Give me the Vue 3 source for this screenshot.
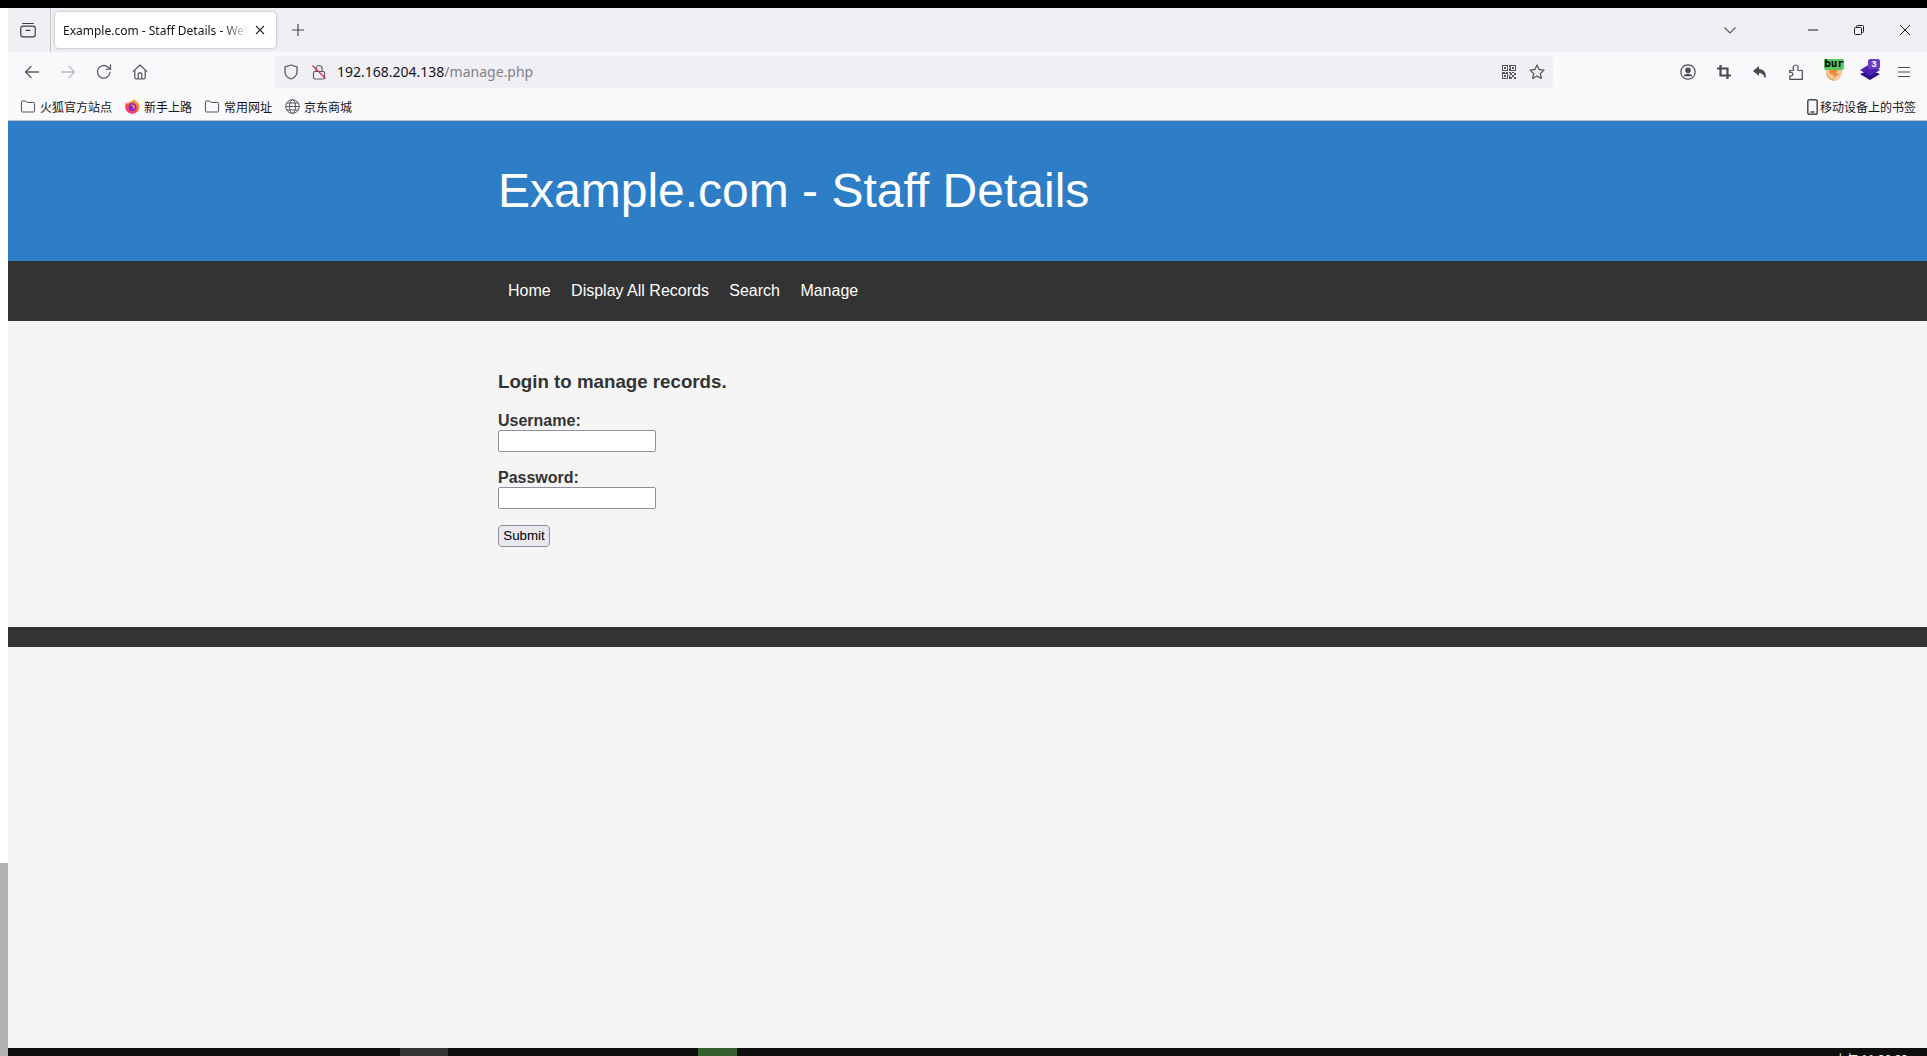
<script setup>
const bookmarks = [
  { icon: 'folder', label: '火狐官方站点' },
  { icon: 'firefox', label: '新手上路' },
  { icon: 'folder', label: '常用网址' },
  { icon: 'globe', label: '京东商城' }
]
const navLinks = ['Home', 'Display All Records', 'Search', 'Manage']
</script>

<template>
  <div class="screen">
    <div class="top-edge"></div>
    <div class="desktop">
      <div class="rail">
        <div class="rail-thumb"></div>
      </div>
      <div class="window">
        <div class="tabstrip">
          <button class="tab-list" aria-label="tabs">
            <svg width="16" height="16" viewBox="0 0 16 16" fill="none" stroke="#3b3b42" stroke-width="1.2">
              <rect x="0.8" y="4.2" width="14.4" height="10.6" rx="2" />
              <path d="M2.8 1.5h10.4" stroke-linecap="round" />
              <path d="M6.2 8.4h3.6" stroke-linecap="round" />
            </svg>
          </button>
          <div class="tab">
            <span class="tab-title">Example.com - Staff Details - Web</span>
            <svg class="tab-close" width="10" height="10" viewBox="0 0 10 10" stroke="#2b2a33" stroke-width="1.1">
              <path d="M1 1l8 8M9 1l-8 8" />
            </svg>
          </div>
          <button class="new-tab" aria-label="new tab">
            <svg width="12" height="12" viewBox="0 0 12 12" stroke="#4a4a52" stroke-width="1.2">
              <path d="M6 0v12M0 6h12" />
            </svg>
          </button>
          <div class="strip-space"></div>
          <button class="tab-menu" aria-label="list tabs">
            <svg width="12" height="7" viewBox="0 0 12 7" fill="none" stroke="#55555c" stroke-width="1.1">
              <path d="M.5.5L6 6l5.500-5.500" />
            </svg>
          </button>
          <button class="win-btn" aria-label="minimise">
            <svg width="10" height="10" viewBox="0 0 10 10" stroke="#1a1a1a" stroke-width="1"><path d="M0 5h10" /></svg>
          </button>
          <button class="win-btn" aria-label="restore">
            <svg width="10" height="10" viewBox="0 0 10 10" fill="none" stroke="#1a1a1a" stroke-width="1">
              <rect x="0.500" y="2.500" width="7" height="7" rx="1" />
              <path d="M2.500 2.500V1.500a1 1 0 0 1 1-1h5a1 1 0 0 1 1 1v5a1 1 0 0 1-1 1H7.500" />
            </svg>
          </button>
          <button class="win-btn last" aria-label="close">
            <svg width="10" height="10" viewBox="0 0 10 10" stroke="#1a1a1a" stroke-width="1"><path d="M0 0l10 10M10 0L0 10" /></svg>
          </button>
        </div>

        <div class="toolbar">
          <button class="tool" aria-label="back">
            <svg width="16" height="14" viewBox="0 0 16 14" fill="none" stroke="#5b5b66" stroke-width="1.3" stroke-linecap="round" stroke-linejoin="round">
              <path d="M14.500 7H1.500M7 1.500L1.500 7 7 12.500" />
            </svg>
          </button>
          <button class="tool" aria-label="forward">
            <svg width="16" height="14" viewBox="0 0 16 14" fill="none" stroke="#b9b9c0" stroke-width="1.3" stroke-linecap="round" stroke-linejoin="round">
              <path d="M1.500 7h13M9 1.500L14.500 7 9 12.500" />
            </svg>
          </button>
          <button class="tool" aria-label="reload">
            <svg width="16" height="16" viewBox="0 0 16 16" fill="none" stroke="#5b5b66" stroke-width="1.3" stroke-linecap="round" stroke-linejoin="round">
              <path d="M14 8.500A6.300 6.300 0 1 1 11.800 3L14.500 5" />
              <path d="M14.500 1v4.200h-4.200" />
            </svg>
          </button>
          <button class="tool" aria-label="home">
            <svg width="16" height="16" viewBox="0 0 16 16" fill="none" stroke="#5b5b66" stroke-width="1.300" stroke-linejoin="round">
              <path d="M1 7.600L8 1l7 6.600M2.800 6.300V13.500a1.300 1.300 0 0 0 1.300 1.300h7.800a1.300 1.300 0 0 0 1.300-1.300V6.300" />
              <path d="M6.200 14.800V10a1 1 0 0 1 1-1h1.600a1 1 0 0 1 1 1v4.800" />
            </svg>
          </button>

          <div class="urlbar">
            <svg class="shield" width="16" height="16" viewBox="0 0 16 16" fill="none" stroke="#5b5b66" stroke-width="1.300" stroke-linejoin="round">
              <path d="M8 1L2 2.800V8c0 3.300 2.600 5.700 6 7 3.400-1.300 6-3.700 6-7V2.800z" />
            </svg>
            <svg class="lock" width="16" height="16" viewBox="0 0 16 16" fill="none" stroke-width="1.200">
              <rect x="2.500" y="7.500" width="11" height="7.500" rx="1.500" stroke="#5b5b66" />
              <path d="M5 7.500V4.500a3 3 0 0 1 6 0v3" stroke="#5b5b66" />
              <path d="M1.500 1.500l13 13" stroke="#e22850" stroke-width="1.300" />
            </svg>
            <span class="url"><span class="host">192.168.204.138</span><span class="path">/manage.php</span></span>
            <div class="url-space"></div>
            <svg class="qr" width="14" height="14" viewBox="0 0 14 14" fill="#55555c">
              <path fill-rule="evenodd" d="M0 0h6v6H0zM1 1v4h4V1zM8 0h6v6H8zM9 1v4h4V1zM0 8h6v6H0zM1 9v4h4V9z" />
              <path d="M2 2h2v2H2zM10 2h2v2h-2zM2 10h2v2H2zM7 0h1v2H7zM7 3h1v3H7zM7 7h2v1H7zM10 7h2v1h-2zM0 7h3v1H0zM4 7h2v1H4zM8 8h2v2H8zM12 8h2v2h-2zM10 10h2v2h-2zM7 10h1v4H7zM8 12h2v2H8zM12 12h2v2h-2z" />
            </svg>
            <svg class="star" width="16" height="16" viewBox="0 0 16 16" fill="none" stroke="#5b5b66" stroke-width="1.300" stroke-linejoin="round">
              <path d="M8 1l2.100 4.500 4.900.6-3.600 3.400.9 4.900L8 12l-4.300 2.400.9-4.900L1 6.100l4.900-.6z" />
            </svg>
          </div>

          <button class="tool first-right" aria-label="account">
            <svg width="16" height="16" viewBox="0 0 16 16" fill="none" stroke="#4a4a52" stroke-width="1.200">
              <circle cx="8" cy="8" r="7.200" />
              <circle cx="8" cy="6.300" r="2.800" fill="#4a4a52" stroke="none" />
              <path d="M3.500 12.300c1-1.800 2.600-2.500 4.500-2.500s3.500.7 4.500 2.500z" fill="#4a4a52" stroke="none" />
            </svg>
          </button>
          <button class="tool" aria-label="crop">
            <svg width="14" height="14" viewBox="0 0 14 14" fill="none" stroke="#4a4a52" stroke-width="2.200">
              <path d="M3.500 0v10.500H14" />
              <path d="M0 3.500h10.500V14" />
            </svg>
          </button>
          <button class="tool" aria-label="undo">
            <svg width="14" height="13" viewBox="0 0 14 13" fill="#4a4a52">
              <path d="M6 0L0 5l6 5V7c3 0 4.700 1.500 5.600 4.500.2.600 1 .6 1.100 0C13.500 6.500 10.500 3.300 6 3z" />
            </svg>
          </button>
          <button class="tool" aria-label="extensions">
            <svg width="14" height="16" viewBox="0 0 14 16" fill="none" stroke="#4a4a52" stroke-width="1.200" stroke-linejoin="round">
              <path d="M.7 6.500H4c.7 0 .8-.6.500-1.100C3.600 4 4.300 1 6.600 1s3 2.700 2.200 4.300c-.3.500-.2 1.200.500 1.200h4v8.800H.8V12c1.500.5 3-.3 3-1.800S2.200 7.800.7 8.500z" />
            </svg>
          </button>
          <button class="tool ext burp" aria-label="burp">
            <span class="burp-icon">
              <span class="burp-label">bur</span>
              <svg class="burp-fox" width="18" height="12" viewBox="0 0 18 12">
                <path d="M1 0h16c1 6-3 12-8 12S0 6 1 0z" fill="#f7c79b" />
                <path d="M4 1l9-1-2 4 3 1-6 4 1-3-4-1z" fill="#ee8a32" />
                <path d="M2 4c0 4 3 7 7 7" fill="none" stroke="#c9a052" stroke-width="1" />
              </svg>
            </span>
          </button>
          <button class="tool ext stack" aria-label="stack">
            <span class="stack-icon">
              <svg width="20" height="16" viewBox="0 0 20 16">
                <path d="M10 6l10 4-10 6L0 10z" fill="#2b0f86" />
                <path d="M10 0l10 6-10 6L0 6z" fill="#4d20b0" />
              </svg>
              <span class="stack-badge">3</span>
            </span>
          </button>
          <button class="tool menu" aria-label="menu">
            <svg width="12" height="10" viewBox="0 0 12 10" stroke="#4a4a52" stroke-width="1.100"><path d="M0 .5h12M0 5h12M0 9.500h12" /></svg>
          </button>
        </div>

        <div class="bookmarks">
          <div v-for="b in bookmarks" :key="b.label" class="bookmark" :class="{ wide: b.icon !== 'folder' }">
            <svg v-if="b.icon === 'folder'" width="14" height="13" viewBox="0 0 14 13" fill="none" stroke="#55555c" stroke-width="1" stroke-linejoin="round">
              <path d="M.5 2a1 1 0 0 1 1-1h3.300l1.500 1.500h6.200a1 1 0 0 1 1 1v7.500a1 1 0 0 1-1 1h-11a1 1 0 0 1-1-1z" />
            </svg>
            <svg v-else-if="b.icon === 'firefox'" width="15" height="15" viewBox="0 0 15 15">
              <defs>
                <linearGradient id="fx" x1="0.8" y1="0" x2="0.1" y2="1">
                  <stop offset="0" stop-color="#ffb52e" />
                  <stop offset="0.500" stop-color="#ff5a3c" />
                  <stop offset="1" stop-color="#f0268a" />
                </linearGradient>
              </defs>
              <path d="M9.500.3c.5 1.600 4.500 2.700 5 7a7.200 7.200 0 1 1-14.300-1c.2-1.200.7-2.300 1.300-3.100.2.800.6 1.200 1 1.500C3.500 3.300 6.800 2.800 9.500.3z" fill="url(#fx)" />
              <circle cx="7.600" cy="8" r="3.900" fill="#7a2bd6" />
              <path d="M5.200 6.200c1.800-1.500 4.500-.6 4.800 1.500.2 1.500-1 2.800-2.500 2.700 2-1.400.5-3.700-2.300-4.200z" fill="#ff8a3c" />
            </svg>
            <svg v-else width="15" height="15" viewBox="0 0 15 15" fill="none" stroke="#55555c" stroke-width="1">
              <circle cx="7.500" cy="7.500" r="6.800" />
              <ellipse cx="7.500" cy="7.500" rx="3" ry="6.800" />
              <path d="M.7 7.500h13.600M1.600 4h11.800M1.600 11h11.800" />
            </svg>
            <span>{{ b.label }}</span>
          </div>
          <div class="bm-space"></div>
          <div class="bookmark mobile">
            <svg width="11" height="16" viewBox="0 0 11 16" fill="none" stroke="#4a4a52" stroke-width="1.500">
              <rect x="0.800" y="0.800" width="9.400" height="14.400" rx="1.800" />
              <path d="M3.500 13h4" />
            </svg>
            <span>移动设备上的书签</span>
          </div>
        </div>

        <div class="page">
          <header class="site-head">
            <div class="container">
              <h1>Example.com - Staff Details</h1>
            </div>
          </header>
          <nav class="site-nav">
            <div class="container nav-row">
              <a v-for="l in navLinks" :key="l" href="#">{{ l }}</a>
            </div>
          </nav>
          <main class="container content">
            <h3>Login to manage records.</h3>
            <form @submit.prevent>
              <p><label for="user">Username:</label><input id="user" type="text" /></p>
              <p><label for="pass">Password:</label><input id="pass" type="password" /></p>
              <p><button class="submit" type="submit">Submit</button></p>
            </form>
          </main>
          <footer class="site-foot"></footer>
        </div>

        <div class="taskbar">
          <div class="task-item active"></div>
          <div class="task-item green"></div>
          <div class="clock">上午 11:30:33</div>
        </div>
      </div>
    </div>
  </div>
</template>

<style>
html, body { margin: 0; padding: 0; overflow: hidden; }
</style>

<style scoped>
.screen {
  width: 1927px;
  height: 1056px;
  display: flex;
  flex-direction: column;
  background: #000;
  overflow: hidden;
  font-family: "Liberation Sans", Arial, sans-serif;
}
.top-edge { height: 8px; background: #000; flex: none; }
.desktop { flex: 1; display: flex; min-height: 0; }
.rail {
  width: 8px;
  flex: none;
  background: #fff;
  display: flex;
  flex-direction: column;
  justify-content: flex-end;
}
.rail-thumb { height: 193px; background: #b2b2b2; }
.window { flex: 1; min-width: 0; display: flex; flex-direction: column; }

button { border: 0; background: none; padding: 0; display: flex; align-items: center; justify-content: center; }

.tabstrip { height: 44px; flex: none; display: flex; align-items: stretch; background: #f0f0f4; }
.tab-list { width: 42px; border-right: 1px solid #c4c4c8; box-sizing: content-box; padding-right: 0; }
.tab-list svg { margin-right: 2px; }
.tab {
  width: 221px;
  box-sizing: border-box;
  margin: 4px 0 4px 4px;
  padding: 0 11px 0 8px;
  background: #fff;
  border-radius: 4px;
  box-shadow: 0 0 3px rgba(0, 0, 0, .3);
  display: flex;
  align-items: center;
}
.tab-title {
  flex: 1;
  min-width: 0;
  white-space: nowrap;
  overflow: hidden;
  font: 12px "Noto Sans", sans-serif;
  color: #15141a;
  -webkit-mask-image: linear-gradient(to right, #000 85%, transparent 98%);
  mask-image: linear-gradient(to right, #000 85%, transparent 98%);
}
.tab-close { margin-left: 3px; flex: none; }
.new-tab { width: 36px; margin-left: 4px; }
.strip-space { flex: 1; }
.tab-menu { width: 36px; margin-right: 42px; }
.win-btn { width: 46px; }
.win-btn.last { width: 45px; }

.toolbar {
  height: 40px;
  flex: none;
  display: flex;
  align-items: center;
  padding: 0 5px 0 6px;
  background: #f9f9fb;
  box-sizing: border-box;
}
.tool { width: 36px; height: 32px; flex: none; }
.urlbar {
  flex: 1;
  min-width: 0;
  height: 32px;
  margin-left: 117px;
  border-radius: 4px;
  background: #f0f0f4;
  display: flex;
  align-items: center;
  padding: 0 8px 0 8px;
  box-sizing: border-box;
}
.lock { margin-left: 12px; }
.url { margin-left: 10px; padding-bottom: 2px; font: 14px "Noto Sans", sans-serif; white-space: nowrap; }
.host { color: #15141a; }
.path { color: #7f7f88; }
.url-space { flex: 1; }
.star { margin-left: 13px; }
.first-right { margin-left: 117px; }
.ext.burp { width: 40px; }
.burp-icon { position: relative; display: block; width: 20px; height: 22px; margin-bottom: 5px; }
.burp-label {
  position: absolute;
  left: 0;
  top: 0;
  width: 20px;
  height: 11px;
  background: #5cc861;
  border-radius: 2px;
  font: bold 11px/10px "DejaVu Sans Mono", monospace;
  letter-spacing: -0.2px;
  color: #000;
  text-align: center;
  z-index: 1;
}
.burp-fox { position: absolute; left: 1px; top: 10px; }
.ext.stack { width: 32px; }
.stack-icon { position: relative; display: block; width: 20px; height: 22px; margin-bottom: 5px; }
.stack-icon svg { position: absolute; left: 0; top: 5px; }
.stack-badge {
  position: absolute;
  right: 0;
  top: 0;
  width: 12px;
  height: 10px;
  background: #6a3cc8;
  border-radius: 2px;
  color: #fff;
  font: bold 9px/10px "Liberation Sans", sans-serif;
  text-align: center;
}
.tool.menu { width: 36px; }

.bookmarks {
  height: 29px;
  flex: none;
  display: flex;
  align-items: center;
  padding: 1px 11px 0 13px;
  box-sizing: border-box;
  background: #f9f9fb;
  border-bottom: 1px solid #c2c2c2;
  font: 12px/16px "Noto Sans CJK SC", sans-serif;
  color: #15141a;
}
.bookmark { display: flex; align-items: center; gap: 5px; margin-right: 13px; }
.bookmark.wide { gap: 4px; }
.bookmark span { white-space: nowrap; }
.bm-space { flex: 1; }
.bookmark.mobile { gap: 2px; margin-right: 0; }

.page { flex: 1; min-height: 0; background: #f5f5f5; display: flex; flex-direction: column; color: #333; }
.container { width: 959px; box-sizing: border-box; padding: 0 10px; margin: 0 auto; }
.site-head { background: #2d7ec7; height: 140px; flex: none; }
h1 {
  margin: 0;
  padding-top: 42px;
  font-size: 48px;
  line-height: 55px;
  font-weight: normal;
  color: #fff;
}
.site-nav { background: #333; height: 60px; flex: none; }
.nav-row { display: flex; align-items: center; gap: 0.400px; height: 60px; }
.nav-row a {
  color: #fff;
  text-decoration: none;
  font-size: 16px;
  padding: 0 10px;
}
.content { padding-top: 31px; padding-bottom: 64px; flex: none; }
h3 { margin: 18.720px 0; font-size: 18.720px; line-height: 21.500px; font-weight: bold; color: #333; }
form p { margin: 16px 0; }
label { display: block; font-size: 16px; line-height: 19px; font-weight: bold; color: #333; }
input {
  display: block;
  width: 158px;
  height: 22px;
  box-sizing: border-box;
  padding: 1px 2px;
  background: #fff;
  border: 1px solid #8f8f9d;
  border-radius: 2px;
  font: 13.333px "Liberation Sans", sans-serif;
}
.submit {
  width: 52px;
  height: 22px;
  box-sizing: border-box;
  background: #e9e9ed;
  border: 1px solid #8f8f9d;
  border-radius: 4px;
  font: 13.333px "Liberation Sans", sans-serif;
  color: #000;
}
.site-foot { height: 20px; background: #333; flex: none; }

.taskbar { flex: none; margin-top: auto; height: 8px; background: #0f0f0f; display: flex; overflow: hidden; position: relative; }
.task-item { height: 8px; flex: none; }
.task-item.active { width: 48px; margin-left: 392px; background: #333; }
.task-item.green { width: 39px; margin-left: 250px; background: #33602c; }
.clock {
  margin-left: auto;
  margin-right: 19px;
  margin-top: 3px;
  color: #e8e8e8;
  font: 12px/16px "Noto Sans CJK SC", sans-serif;
  white-space: nowrap;
}
</style>
